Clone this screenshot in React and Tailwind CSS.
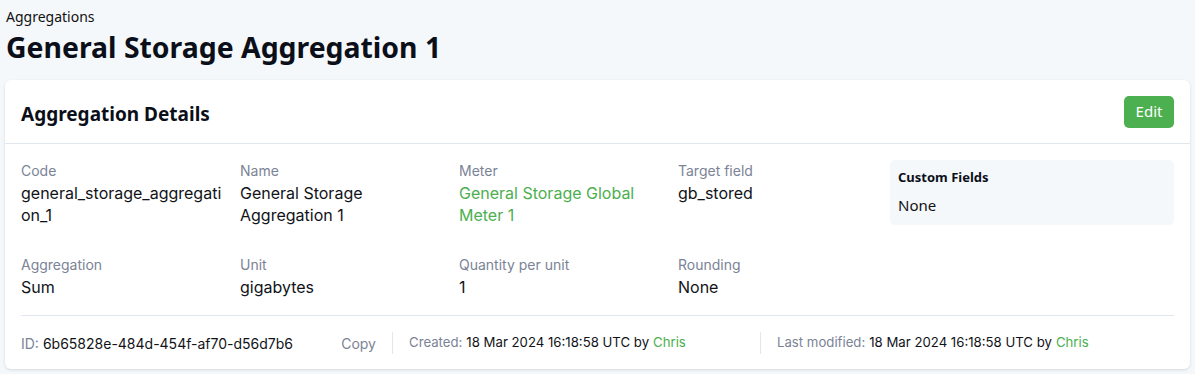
export default function App() {
  const body = { fontFamily: "Inter, 'Noto Sans', sans-serif" };
  const head = { fontFamily: "'Noto Sans', 'Open Sans', sans-serif" };
  const Field = ({ label, children, green }) => (
    <div>
      <div className="text-[14px] leading-[22px] text-[#7b8396]">{label}</div>
      <div className={`text-[16px] leading-[22px] [overflow-wrap:anywhere] ${green ? "text-[#4caf50]" : "text-[#111318]"}`}>{children}</div>
    </div>
  );
  return (
    <div className="min-h-[374px] w-[1195px] bg-[#f5f8fb] pt-[6px]" style={body}>
      <div className="px-[6px]" style={head}>
        <div className="text-[14px] leading-[22px] text-[#111]">Aggregations</div>
        <h1 className="text-[28.4px] leading-[38px] font-bold text-[#0b0f19]">General Storage Aggregation 1</h1>
      </div>
      <div className="mx-[5px] mt-[14px] rounded-[6px] bg-white shadow-[0_1px_3px_rgba(0,0,0,0.12)]">
        <div className="flex items-center justify-between px-4 h-[64px] border-b border-[#e1e7ef]">
          <h2 className="text-[19px] font-bold text-[#0b0f19] pt-[5px]" style={head}>Aggregation Details</h2>
          <button className="h-[32px] w-[50px] rounded-[5px] bg-[#4caf50] text-white text-[15px]" style={head}>Edit</button>
        </div>
        <div className="px-4 pt-4">
          <div className="flex">
            <div className="grid grid-cols-[repeat(4,203px)] gap-x-4 gap-y-[28px]">
              <Field label="Code">general_storage_aggregation_1</Field>
              <Field label="Name">General Storage Aggregation 1</Field>
              <Field label="Meter" green>General Storage Global Meter 1</Field>
              <Field label="Target field">gb_stored</Field>
              <Field label="Aggregation">Sum</Field>
              <Field label="Unit">gigabytes</Field>
              <Field label="Quantity per unit">1</Field>
              <Field label="Rounding">None</Field>
            </div>
            <div className="ml-auto w-[284px] h-[65px] rounded-[5px] bg-[#f5f8fb] px-[8px] pt-[8px]" style={head}>
              <div className="text-[13px] font-bold text-[#0b0f19] leading-[18px]">Custom Fields</div>
              <div className="text-[15px] text-[#111] mt-[9px] leading-[20px]">None</div>
            </div>
          </div>
          <div className="mt-[17px] border-t border-[#e1e7ef] flex items-center h-[54px] pt-[1px] text-[13.2px]">
            <div className="w-[355px] flex items-center text-[14px]">
              <span className="text-[#7b8396]">ID:</span>
              <span className="text-[#111318] ml-[4px]">6b65828e-484d-454f-af70-d56d7b6</span>
              <span className="ml-auto text-[#7b8396]">Copy</span>
            </div>
            <div className="ml-4 w-[368px] pl-4 border-l border-[#e1e7ef] h-[22px] flex items-center">
              <span className="text-[#7b8396]">Created:</span>
              <span className="text-[#111318] ml-[4px]">18 Mar 2024 16:18:58 UTC by</span>
              <span className="text-[#4caf50] ml-[4px]">Chris</span>
            </div>
            <div className="pl-4 border-l border-[#e1e7ef] h-[22px] flex items-center">
              <span className="text-[#7b8396]">Last modified:</span>
              <span className="text-[#111318] ml-[4px]">18 Mar 2024 16:18:58 UTC by</span>
              <span className="text-[#4caf50] ml-[4px]">Chris</span>
            </div>
          </div>
        </div>
      </div>
    </div>
  );
}
